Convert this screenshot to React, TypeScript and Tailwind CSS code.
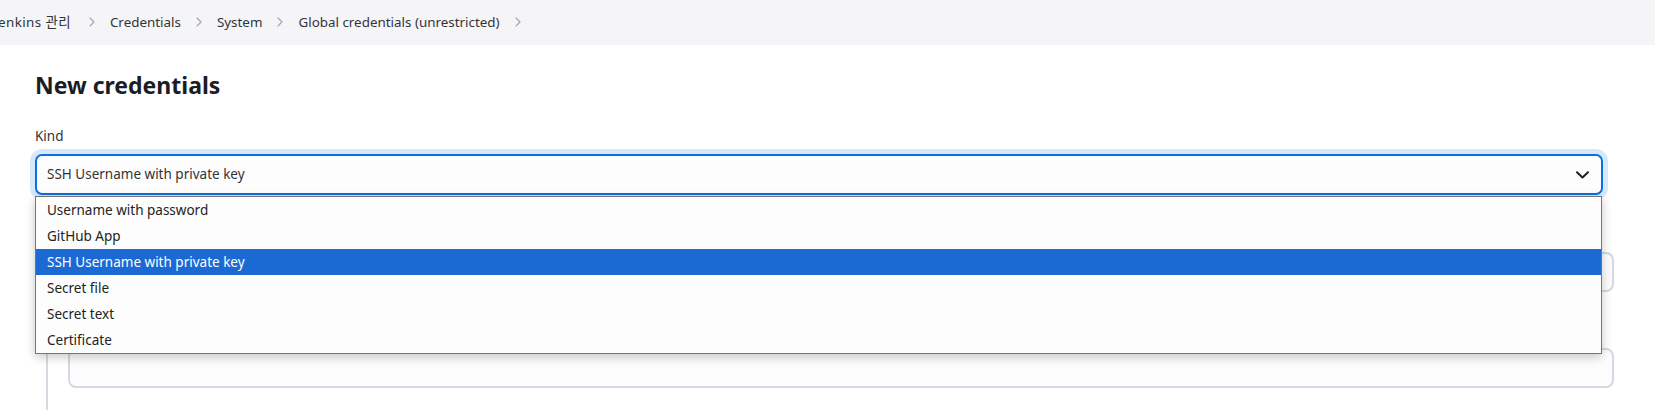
import { ChevronRight } from 'lucide-react'

const crumbs = ['Jenkins 관리', 'Credentials', 'System', 'Global credentials (unrestricted)']

const kinds = [
  'Username with password',
  'GitHub App',
  'SSH Username with private key',
  'Secret file',
  'Secret text',
  'Certificate',
]

export default function App() {
  const selected = 'SSH Username with private key'

  return (
    <div
      className="min-h-[410px] overflow-hidden bg-white text-[#333]"
      style={{ fontFamily: '"Noto Sans", "Noto Sans CJK KR", sans-serif' }}
    >
      {/* breadcrumb bar */}
      <div className="flex h-[45px] items-center bg-[#f5f5f7]">
        <ol className="-ml-[6px] flex items-center text-[13.4px] text-[#33343a]">
          {crumbs.map((c, i) => (
            <li key={c} className="flex items-center">
              <span className={i === 0 ? 'tracking-[0.4px]' : ''}>{c}</span>
              <ChevronRight
                className={
                  i === 0
                    ? 'ml-[13px] mr-[10px] h-[16px] w-[16px] text-[#9aa6bd]'
                    : 'mx-[10px] h-[16px] w-[16px] text-[#9aa6bd]'
                }
                strokeWidth={1.7}
              />
            </li>
          ))}
        </ol>
      </div>

      <div className="pl-[35px] pr-[52px]">
        <h1 className="mt-[25px] text-[23px] font-bold leading-[30px] text-[#1c1c24]">New credentials</h1>

        <div className="mt-[26px] text-[13.5px] leading-[20px]">Kind</div>

        <div className="relative mt-[8px]">
          <div className="flex h-[41px] items-center justify-between rounded-[7px] border-2 border-[#0b6fe3] bg-[#fdfdfd] pl-[10px] pr-[12px] shadow-[0_0_0_5px_#d8e8fb]">
            <span className="text-[13.5px]">{selected}</span>
            <svg width="13" height="8" viewBox="0 0 13 8" fill="none">
              <path d="M1 1.2 6.5 6.5 12 1.2" stroke="#222" strokeWidth="2" strokeLinecap="round" strokeLinejoin="round" />
            </svg>
          </div>

          {/* nested form behind the open list */}
          <div className="ml-[11px] mt-[16px] border-l-2 border-[#d5dae3] pb-[40px] pl-[20px]">
            <div className="h-[20px]" />
            <div className="mt-[21px] h-[40px] w-[calc(100%+11px)] rounded-[8px] border-2 border-[#d3d8e2] bg-[#fdfdfd]" />
            <div className="mt-[30px] h-[20px]" />
            <div className="mt-[6px] h-[40px] w-[calc(100%+11px)] rounded-[8px] border-2 border-[#d3d8e2] bg-[#fdfdfd]" />
          </div>

          {/* open option list */}
          <ul className="absolute left-0 right-[1px] top-[42px] border border-[#767676] bg-[#fdfdfd] text-[13.5px] shadow-[0_3px_10px_rgba(0,0,0,0.22)]">
            {kinds.map((k) => (
              <li
                key={k}
                className={
                  k === selected
                    ? 'flex h-[26px] items-center bg-[#1b69d3] pl-[11px] text-white'
                    : 'flex h-[26px] items-center pl-[11px] text-[#222]'
                }
              >
                {k}
              </li>
            ))}
          </ul>
        </div>
      </div>
    </div>
  )
}
